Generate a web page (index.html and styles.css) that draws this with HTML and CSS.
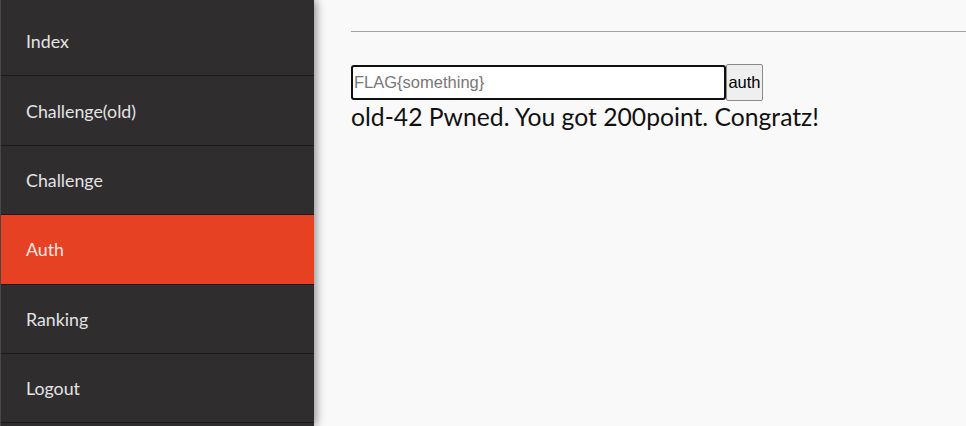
FILE: index.html
```html
<!DOCTYPE html>
<html>
<head>
<meta charset="utf-8">
<link rel="stylesheet" href="styles.css">
</head>
<body>
<nav class="sidebar">
  <ul class="menu">
    <li class="item">Index</li>
    <li class="item">Challenge(old)</li>
    <li class="item">Challenge</li>
    <li class="item active">Auth</li>
    <li class="item">Ranking</li>
    <li class="item">Logout</li>
  </ul>
</nav>
<main class="main">
  <hr class="rule">
  <form class="auth-form">
    <input class="flag-input" type="text" placeholder="FLAG{something}"><button class="auth-btn" type="button">auth</button>
  </form>
  <p class="result">old-42 Pwned. You got 200point. Congratz!</p>
</main>
</body>
</html>
```
FILE: styles.css
```css
html, body {
  margin: 0;
  padding: 0;
  height: 100%;
}
body {
  display: flex;
  background: #f9f9f9;
  font-family: Lato, "Open Sans", sans-serif;
  overflow: hidden;
}
.sidebar {
  width: 313px;
  flex: 0 0 313px;
  height: 100%;
  background: #302d2e;
  border-left: 1px solid #4a4748;
  box-shadow: 2px 0 9px rgba(0, 0, 0, 0.45);
  position: relative;
  z-index: 1;
}
.menu {
  list-style: none;
  margin: 0;
  padding: 7px 0 0;
}
.item {
  height: 68.4px;
  border-bottom: 1px solid #1c1a1b;
  display: flex;
  align-items: center;
  padding-left: 25px;
  color: #e4e4e4;
  font-size: 17.8px;
  box-sizing: content-box;
}
.item.active {
  background: #e64122;
  color: #fbe6e1;
}
.main {
  flex: 1;
  padding: 31px 0 0 37px;
}
.rule {
  margin: 0;
  border: 0;
  border-top: 1px solid #a3a3a3;
  height: 0;
}
.auth-form {
  margin: 32px 0 0;
  display: flex;
  align-items: center;
}
.flag-input {
  width: 375px;
  height: 35px;
  box-sizing: border-box;
  border: 2px solid #101010;
  border-radius: 3px;
  background: #fff;
  padding: 1px 1px;
  font-family: "Liberation Sans", Arial, sans-serif;
  font-size: 16.5px;
  color: #222;
  outline: none;
}
.flag-input::placeholder {
  color: #777;
}
.auth-btn {
  height: 37px;
  width: 37px;
  box-sizing: border-box;
  padding: 0 1px;
  border: 1px solid #8a8a8a;
  border-radius: 2px;
  background: #efefef;
  font-family: "Liberation Sans", Arial, sans-serif;
  font-size: 16.5px;
  color: #000;
}
.result {
  margin: 1px 0 0;
  font-size: 24.7px;
  color: #111;
  line-height: 30px;
}
```
